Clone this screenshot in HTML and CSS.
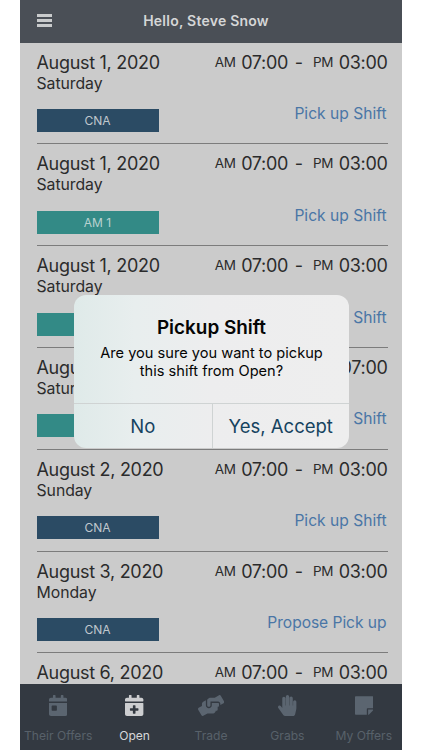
FILE: index.html
```html
<!DOCTYPE html>
<html lang="en">
<head>
<meta charset="utf-8">
<title>Open Shifts</title>
<link rel="stylesheet" href="styles.css">
</head>
<body>
<div class="phone">
  <header class="topbar">
    <div class="menu"><span></span><span></span><span></span></div>
    <h1>Hello, Steve Snow</h1>
  </header>
  <main class="shifts">
    <article class="shift">
      <div class="line"><span class="date">August 1, 2020</span><span class="time"><small>AM</small><b>07:00</b><i>-</i><small>PM</small><b>03:00</b></span></div>
      <div class="day">Saturday</div>
      <div class="line foot"><span class="tag">CNA</span><a class="pick">Pick up Shift</a></div>
    </article>
    <article class="shift">
      <div class="line"><span class="date">August 1, 2020</span><span class="time"><small>AM</small><b>07:00</b><i>-</i><small>PM</small><b>03:00</b></span></div>
      <div class="day">Saturday</div>
      <div class="line foot"><span class="tag teal">AM 1</span><a class="pick">Pick up Shift</a></div>
    </article>
    <article class="shift">
      <div class="line"><span class="date">August 1, 2020</span><span class="time"><small>AM</small><b>07:00</b><i>-</i><small>PM</small><b>03:00</b></span></div>
      <div class="day">Saturday</div>
      <div class="line foot"><span class="tag teal"></span><a class="pick">Pick up Shift</a></div>
    </article>
    <article class="shift">
      <div class="line"><span class="date">August 1, 2020</span><span class="time"><b>07:00</b></span></div>
      <div class="day">Saturday</div>
      <div class="line foot"><span class="tag teal"></span><a class="pick">Pick up Shift</a></div>
    </article>
    <article class="shift">
      <div class="line"><span class="date">August 2, 2020</span><span class="time"><small>AM</small><b>07:00</b><i>-</i><small>PM</small><b>03:00</b></span></div>
      <div class="day">Sunday</div>
      <div class="line foot"><span class="tag">CNA</span><a class="pick">Pick up Shift</a></div>
    </article>
    <article class="shift">
      <div class="line"><span class="date">August 3, 2020</span><span class="time"><small>AM</small><b>07:00</b><i>-</i><small>PM</small><b>03:00</b></span></div>
      <div class="day">Monday</div>
      <div class="line foot"><span class="tag">CNA</span><a class="pick propose">Propose Pick up</a></div>
    </article>
    <article class="shift">
      <div class="line"><span class="date">August 6, 2020</span><span class="time"><small>AM</small><b>07:00</b><i>-</i><small>PM</small><b>03:00</b></span></div>
    </article>
  </main>
  <nav class="tabs">
    <a class="tab"><svg viewBox="0 0 448 512"><path d="M0 464c0 26.500 21.500 48 48 48h352c26.500 0 48-21.500 48-48V192H0v272zm64-192c0-8.800 7.200-16 16-16h96c8.800 0 16 7.200 16 16v96c0 8.800-7.200 16-16 16H80c-8.800 0-16-7.200-16-16v-96zM400 64h-48V16c0-8.800-7.200-16-16-16h-32c-8.800 0-16 7.200-16 16v48H160V16c0-8.800-7.200-16-16-16h-32c-8.800 0-16 7.200-16 16v48H48C21.500 64 0 85.500 0 112v48h448v-48c0-26.500-21.500-48-48-48z"/></svg><span>Their Offers</span></a>
    <a class="tab active"><svg viewBox="0 0 448 512"><path d="M436 160H12c-6.600 0-12-5.400-12-12v-36c0-26.500 21.500-48 48-48h48V12c0-6.600 5.400-12 12-12h40c6.600 0 12 5.400 12 12v52h128V12c0-6.600 5.400-12 12-12h40c6.600 0 12 5.400 12 12v52h48c26.500 0 48 21.500 48 48v36c0 6.600-5.400 12-12 12zM12 192h424c6.600 0 12 5.400 12 12v260c0 26.500-21.500 48-48 48H48c-26.500 0-48-21.500-48-48V204c0-6.600 5.400-12 12-12zm316 140c0-6.600-5.400-12-12-12h-60v-60c0-6.600-5.400-12-12-12h-40c-6.600 0-12 5.400-12 12v60h-60c-6.600 0-12 5.400-12 12v40c0 6.600 5.400 12 12 12h60v60c0 6.600 5.400 12 12 12h40c6.600 0 12-5.400 12-12v-60h60c6.600 0 12-5.400 12-12v-40z"/></svg><span>Open</span></a>
    <a class="tab"><svg viewBox="0 0 640 512"><path d="M488 192H336v56c0 39.700-32.300 72-72 72s-72-32.300-72-72V126.400l-64.900 39C107.800 176.900 96 197.800 96 220.200v47.300l-80 46.200C.7 322.500-4.600 342.100 4.300 357.400l80 138.600c8.800 15.300 28.400 20.500 43.700 11.700L231.400 448H368c35.300 0 64-28.700 64-64h16c17.700 0 32-14.300 32-32v-64h8c13.300 0 24-10.700 24-24v-48c0-13.300-10.700-24-24-24zm147.700-37.400L555.700 16C546.900.7 527.300-4.500 512 4.300L408.600 64H306.400c-12 0-23.700 3.400-33.900 9.700L239 94.600c-9.400 5.800-15 16.100-15 27.100V248c0 22.100 17.900 40 40 40s40-17.900 40-40v-88h184c30.900 0 56 25.100 56 56v28.500l80-46.200c15.300-8.900 20.500-28.400 11.700-43.700z"/></svg><span>Trade</span></a>
    <a class="tab"><svg viewBox="0 0 448 512"><path d="M408.781 128.007C386.356 127.578 368 146.360 368 168.790V256h-8V79.790c0-22.430-18.356-41.212-40.781-40.783C297.488 39.423 280 57.169 280 79v177h-8V40.790C272 18.360 253.644-.422 231.219.007 209.488.423 192 18.169 192 40v216h-8V80.790c0-22.430-18.356-41.212-40.781-40.783C121.488 40.423 104 58.169 104 80v235.992l-31.648-43.519c-12.993-17.866-38.009-21.817-55.877-8.823-17.865 12.994-21.815 38.010-8.822 55.877l125.601 172.705A48 48 0 0 0 172.073 512h197.590c22.274 0 41.622-15.324 46.724-37.006l26.508-112.660a192.011 192.011 0 0 0 5.104-43.975V168c.001-21.831-17.487-39.577-39.218-39.993z"/></svg><span>Grabs</span></a>
    <a class="tab"><svg viewBox="0 0 448 512"><path d="M312 320h136V56c0-13.300-10.700-24-24-24H24C10.700 32 0 42.700 0 56v400c0 13.300 10.700 24 24 24h264V344c0-13.200 10.800-24 24-24zm129 55l-98 98c-4.500 4.500-10.600 7-17 7h-6V352h128v6.100c0 6.300-2.500 12.400-7 16.900z"/></svg><span>My Offers</span></a>
  </nav>
  <div class="dialog">
    <div class="message">
      <h2>Pickup Shift</h2>
      <p>Are you sure you want to pickup<br>this shift from Open?</p>
    </div>
    <div class="actions"><button>No</button><button class="yes">Yes, Accept</button></div>
  </div>
</div>
</body>
</html>
```
FILE: styles.css
```css
* { box-sizing: border-box; margin: 0; padding: 0; }
body { background: #fff; font-family: Inter, "Liberation Sans", sans-serif; overflow: hidden; }
.phone { position: relative; width: 382px; height: 750px; margin-left: 20px; display: flex; flex-direction: column; background: #cbcbcb; }
.topbar { flex: none; height: 42.6px; display: grid; grid-template-columns: 60px 1fr 70px; background: #4a4f56; color: #d5d6d7; }
.topbar h1 { font-size: 14px; font-weight: 600; line-height: 41px; text-align: center; white-space: nowrap; letter-spacing: 0.23px; }
.menu { display: flex; flex-direction: column; gap: 2px; padding: 13.600px 0 0 17px; }
.menu span { width: 15px; height: 3px; background: #c9cbcc; }
.shifts { flex: 1; min-height: 0; overflow: hidden; padding: 0 14.500px 0 16.500px; color: #2b2b2c; }
.shift { height: 101.800px; padding-top: 8px; border-bottom: 1px solid #7c7c7c; }
.line { display: flex; justify-content: space-between; }
.date { font-size: 18px; line-height: 23px; white-space: nowrap; letter-spacing: -0.3px; }
.time { display: flex; align-items: center; line-height: 23px; }
.time small { font-size: 13.500px; letter-spacing: -0.3px; }
.time b { font-size: 18px; font-weight: 400; margin-left: 5.500px; letter-spacing: -0.300px; }
.time i { font-size: 18px; font-style: normal; margin: 0 10px 0 6.500px; }
.day { font-size: 15.800px; line-height: 20px; margin-top: 0; letter-spacing: -0.05px; }
.foot { margin-top: 14.400px; }
.tag { width: 122px; height: 23px; margin-top: 1px; background: #2b4b64; color: #c0c8ce; font-size: 12px; line-height: 23px; text-align: center; }
.tag.teal { background: #338a86; color: #b9d2d0; }
.pick { font-size: 15.600px; line-height: 20px; margin: -4px 1px 0 0; color: #4a76a6; white-space: nowrap; }
.propose { letter-spacing: -0.050px; }
.tabs { flex: none; height: 66px; display: grid; grid-template-columns: repeat(5, 1fr); background: #333941; }
.tab { display: flex; flex-direction: column; align-items: center; padding-top: 10.500px; color: #58616a; font-size: 12.100px; white-space: nowrap; }
.tab svg { height: 21px; fill: #5b6570; }
.tab span { line-height: 16px; margin-top: 12.200px; }
.tab.active { color: #d6d7d9; }
.tab.active svg { fill: #cdced0; }
.dialog { position: absolute; left: 54px; top: 295px; width: 275px; height: 153px; border-radius: 12px; overflow: hidden; display: flex; flex-direction: column; text-align: center; background: linear-gradient(90deg, #dfeae9 0, #e8eeee 22%, #ededee 50%, #eeeeee 100%); }
.message { height: 109px; padding-top: 21px; border-bottom: 1px solid #cfd3d3; color: #050505; }
.message h2 { font-size: 18.900px; line-height: 24px; font-weight: 600; }
.message p { font-size: 14.600px; line-height: 18.300px; margin-top: 4px; white-space: nowrap; }
.actions { flex: 1; display: grid; grid-template-columns: 1fr 1fr; }
.actions button { border: 0; background: none; font: 18.500px Inter, "Liberation Sans", sans-serif; color: #15435f; white-space: nowrap; }
.actions .yes { border-left: 1px solid #cfd3d3; }
```
